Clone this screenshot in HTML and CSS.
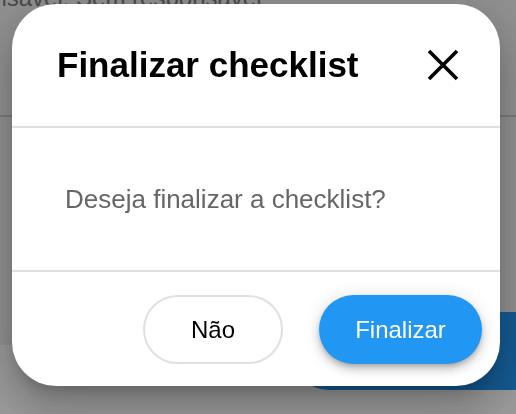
FILE: index.html
```html
<!DOCTYPE html>
<html lang="pt-BR">
<head>
    <meta charset="UTF-8">
    <meta name="viewport" content="width=device-width, initial-scale=1.0">
    <title>Checklist</title>
    <link rel="stylesheet" href="styles.css">
</head>
<body>
    <!-- pagina por tras do modal -->
    <div class="page">
        <p class="page-info">Responsável: Sem responsável</p>
        <div class="page-divider"></div>
        <div class="page-actions">
            <button class="page-btn" aria-label="Finalizar checklist"></button>
        </div>
    </div>

    <!-- modal -->
    <div class="overlay">
        <div class="dialog">
            <div class="dialog-header">
                <h2 class="dialog-title">Finalizar checklist</h2>
                <button class="dialog-close" aria-label="Fechar">
                    <svg width="32" height="32" viewBox="0 0 32 32">
                        <path d="M2 2 L30 30 M30 2 L2 30" stroke="#000" stroke-width="3.6" fill="none"/>
                    </svg>
                </button>
            </div>
            <div class="dialog-body">
                <p>Deseja finalizar a checklist?</p>
            </div>
            <div class="dialog-footer">
                <button class="btn btn-outline">Não</button>
                <button class="btn btn-primary">Finalizar</button>
            </div>
        </div>
    </div>
</body>
</html>
```

FILE: styles.css
```css
*{
    margin: 0;
    padding: 0;
    box-sizing: border-box;
}

body{
    width: 516px;
    height: 414px;
    overflow: hidden;
    font-family: "Liberation Sans", Arial, sans-serif;
}

button{
    font-family: inherit;
    border: none;
    background: none;
    cursor: pointer;
}

/* pagina de fundo */
.page{
    height: 414px;
    display: flex;
    flex-direction: column;
    background: linear-gradient(#f0f0f0 345px, #fff 345px);
}

.page-info{
    margin-top: -16px;
    margin-left: -76px;
    font-size: 24px;
    line-height: 28px;
    color: #7a7a7a;
    white-space: nowrap;
}

.page-divider{
    margin-top: 103px;
    height: 2px;
    background: #cbcbcb;
}

.page-actions{
    margin-top: 195px;
    padding-left: 290px;
    display: flex;
}

.page-btn{
    width: 300px;
    height: 78px;
    border-radius: 39px;
    background: #2196f3;
    flex-shrink: 0;
}

/* modal */
.overlay{
    position: fixed;
    inset: 0;
    background: rgba(0, 0, 0, 0.4);
    padding: 4px 0 0 12px;
}

.dialog{
    width: 488px;
    height: 382px;
    background: #fff;
    border-radius: 44px;
    display: flex;
    flex-direction: column;
    overflow: hidden;
    box-shadow: 0 11px 15px -7px rgba(0,0,0,.2), 0 24px 38px 3px rgba(0,0,0,.14), 0 9px 46px 8px rgba(0,0,0,.12);
}

.dialog-header{
    height: 124px;
    flex-shrink: 0;
    border-bottom: 2px solid #e0e0e0;
    display: flex;
    align-items: center;
    justify-content: space-between;
    padding: 0 41px 0 45px;
}

.dialog-title{
    font-size: 35px;
    font-weight: bold;
    color: #000;
}

.dialog-close{
    width: 32px;
    height: 32px;
    display: flex;
}

.dialog-body{
    height: 144px;
    flex-shrink: 0;
    border-bottom: 2px solid #e0e0e0;
    display: flex;
    align-items: center;
    padding-left: 53px;
    font-size: 26px;
    color: #666;
}

.dialog-footer{
    flex: 1;
    display: flex;
    align-items: center;
    justify-content: flex-end;
    gap: 36px;
    padding: 1px 18px 0 0;
}

.btn{
    height: 69px;
    border-radius: 35px;
    font-size: 24px;
}

.btn-outline{
    width: 140px;
    border: 2px solid #e0e0e0;
    color: #000;
}

.btn-primary{
    width: 163px;
    background: #2196f3;
    color: #fff;
    box-shadow: 0 3px 5px -1px rgba(0,0,0,.2), 0 6px 10px 0 rgba(0,0,0,.14), 0 1px 18px 0 rgba(0,0,0,.12);
}
```
